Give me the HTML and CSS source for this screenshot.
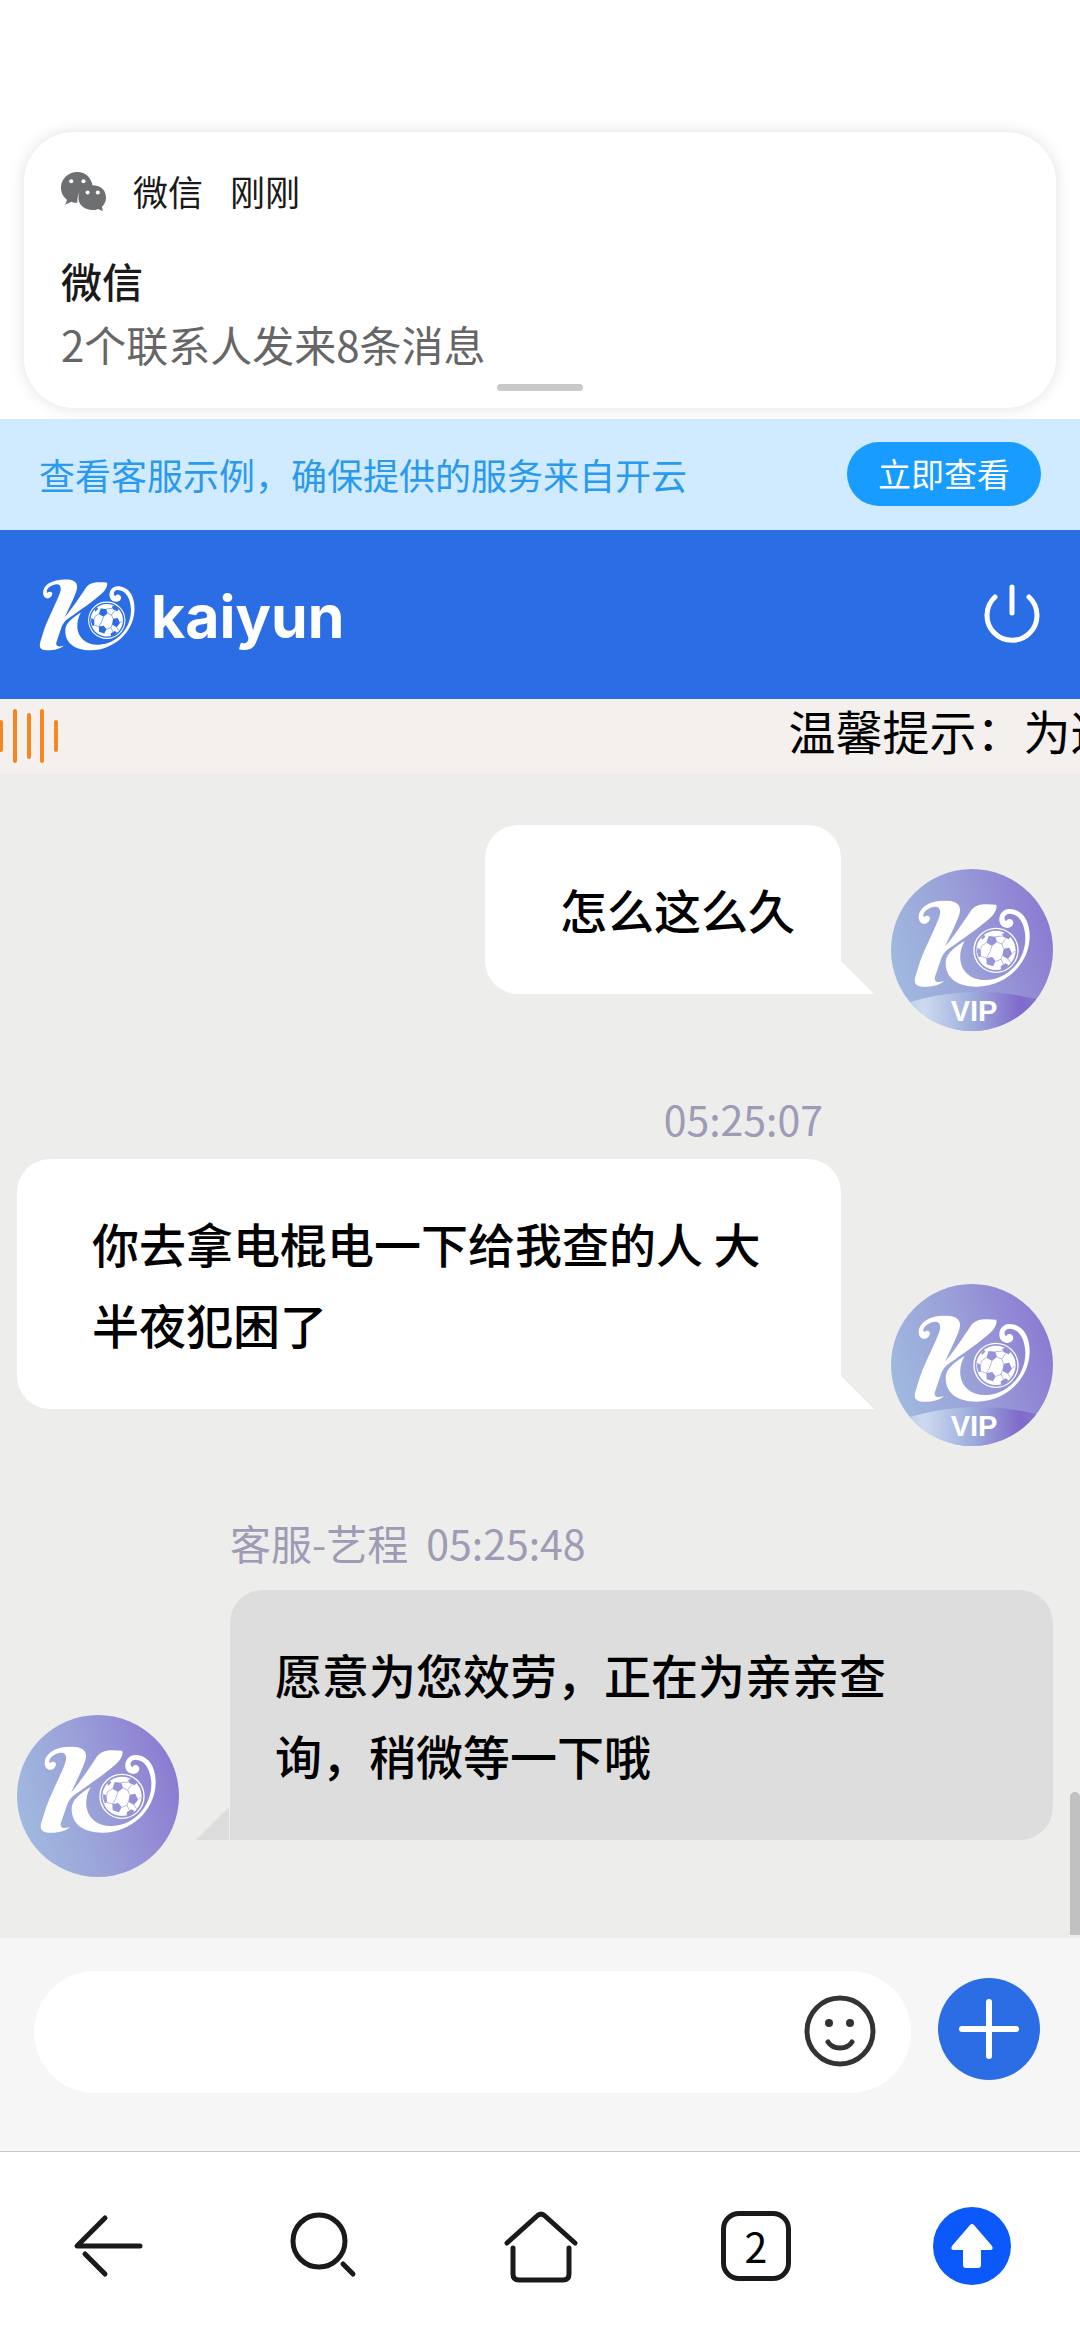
FILE: index.html
```html
<!DOCTYPE html>
<html lang="zh-CN">
<head>
    <meta charset="UTF-8">
    <meta name="viewport" content="width=device-width, initial-scale=1.0">
    <title>kaiyun</title>
    <link rel="stylesheet" href="styles.css">
</head>
<body>
    <!-- Shared logo and avatar shapes -->
    <svg class="defs" aria-hidden="true">
        <defs>
            <linearGradient id="avatar-bg" x1="0" y1="0.7" x2="1" y2="0.4">
                <stop offset="0" stop-color="#a0bbdf"/>
                <stop offset="0.5" stop-color="#9a9fd8"/>
                <stop offset="1" stop-color="#8b7bd2"/>
            </linearGradient>
            <linearGradient id="vip-bg" x1="0" y1="0" x2="1" y2="0">
                <stop offset="0.02" stop-color="#b4c4e6"/>
                <stop offset="0.2" stop-color="#cddaf0"/>
                <stop offset="0.5" stop-color="#9daddc"/>
                <stop offset="0.8" stop-color="#8069cb"/>
                <stop offset="1" stop-color="#8c83d4"/>
            </linearGradient>
            <clipPath id="avatar-clip"><circle cx="306" cy="285" r="243"/></clipPath>
            <mask id="ball-mask" maskUnits="userSpaceOnUse" x="300" y="210" width="160" height="160">
                <circle cx="378" cy="286" r="59" fill="#fff"/>
                <g fill="#000">
                    <path d="M356 243l20 2 5 16-15 12-17-10z"/>
                    <path d="M396 236l12-3 14 12-6 8-16-7z"/>
                    <path d="M401 281l17-3 8 18-12 16-17-10z"/>
                    <path d="M349 309l18-3 10 13-8 15-19-6z"/>
                    <path d="M392 334l15-9 8 5-9 11-13 3z"/>
                    <path d="M322 278l10 6 1 20-7 3-5-16z"/>
                    <path d="M334 247l8-8 4 6-10 10z"/>
                </g>
                <g stroke="#000" stroke-width="2" fill="none">
                    <path d="M381 261l14 6 6 14M366 273l-8 22-9 14M349 263l-15 10-2 11M333 304l16 5M377 319l16-6 4-11M393 313l8 16M376 245l22-2M395 267l12-16M414 312l8 11M426 296l8-8"/>
                </g>
            </mask>
        </defs>
        <symbol id="logo" viewBox="132 136 348 262">
            <path d="M180 190C178 206 160 212 151 201C141 187 146 165 166 152C186 139 215 136 238 138C264 140 275 154 268 178C261 201 240 243 225 275C248 248 280 202 302 168C315 148 338 145 378 149C383 156 376 174 361 188C328 218 280 250 238 280C224 290 217 300 211 318L195 365C190 381 203 385 222 378C207 392 182 396 158 395C136 394 131 384 136 365L150 320C166 275 196 219 208 185C215 162 206 153 190 156C166 161 155 178 162 187C167 179 180 181 180 190Z"/>
            <path d="M284 258C242 284 227 301 227 325C227 371 264 395 318 395C402 396 477 331 479 246C480 195 455 162 418 162C396 162 384 183 389 202C395 223 427 225 430 205C431 192 413 187 409 199C400 193 402 177 418 176C447 176 464 206 466 246C468 313 416 372 350 375C303 377 275 350 271 315C269 292 275 273 284 258Z"/>
            <circle cx="378" cy="286" r="66" fill="none" stroke="currentColor" stroke-width="4"/>
            <rect x="312" y="220" width="132" height="132" mask="url(#ball-mask)"/>
        </symbol>
        <symbol id="avatar-face" viewBox="63 42 486 486">
            <circle cx="306" cy="285" r="243" fill="url(#avatar-bg)"/>
            <use href="#logo" x="132" y="136" width="348" height="262"/>
        </symbol>
        <symbol id="vip-ribbon" viewBox="63 42 486 486">
            <path d="M63 460Q306 370 549 446V540H63Z" fill="url(#vip-bg)" clip-path="url(#avatar-clip)"/>
        </symbol>
    </svg>

    <div class="app">
        <!-- Push notification -->
        <section class="notification">
            <div class="notification-source">
                <svg class="icon-wechat" viewBox="0 0 44 38">
                    <path fill="#6e6f71" d="M16 0C7 0 0 7 0 15c0 6 3 10 6 12l-2 5 6-3c2 1 4 1 6 1v-3c0-8 7-13 15-13C30 6 24 0 16 0Z"/>
                    <path fill="#6e6f71" d="M31 13c-8 0-14 5-14 12s6 12 14 12c2 0 4 0 5-1l5 2-1-4c2-2 4-5 4-9 0-7-5-12-13-12Z"/>
                    <g fill="#fff"><circle cx="10" cy="9" r="2"/><circle cx="22" cy="9" r="2"/><circle cx="26" cy="20" r="2"/><circle cx="36" cy="20" r="2"/></g>
                </svg>
                <span>微信</span>
                <span>刚刚</span>
            </div>
            <div class="notification-title">微信</div>
            <div class="notification-text">2个联系人发来8条消息</div>
            <div class="notification-handle"></div>
        </section>

        <div class="banner">
            <span>查看客服示例，确保提供的服务来自开云</span>
            <button class="banner-button" type="button">立即查看</button>
        </div>

        <header class="header">
            <a class="brand" href="#">
                <svg class="brand-logo"><use href="#logo"/></svg>
                <span class="brand-name">kaiyun</span>
            </a>
            <button class="icon-button" type="button" aria-label="退出">
                <svg width="58" height="62" viewBox="0 0 58 62" fill="none" stroke="#fff" stroke-width="5" stroke-linecap="round">
                    <path d="M29 3v26M12 13a25 25 0 1 0 34 0"/>
                </svg>
            </button>
        </header>

        <div class="notice">
            <svg class="notice-icon" width="60" height="56" viewBox="0 0 60 56" stroke="#f6861f" stroke-width="4" stroke-linecap="round">
                <path d="M1 14v28M15 3v50M29 7v42M42 3v50M56 14v28"/>
            </svg>
            <div class="notice-text">温馨提示：为这</div>
        </div>

        <main class="chat">
            <div class="message message-mine">
                <div class="message-body">
                    <div class="bubble">怎么这么久</div>
                </div>
                <svg class="avatar" viewBox="0 0 162 162">
                    <use href="#avatar-face"/>
                    <use href="#vip-ribbon"/>
                    <text class="vip-text" x="83" y="152">VIP</text>
                </svg>
            </div>

            <div class="message message-mine">
                <div class="message-body">
                    <div class="message-meta">05:25:07</div>
                    <div class="bubble">你去拿电棍电一下给我查的人 大半夜犯困了</div>
                </div>
                <svg class="avatar" viewBox="0 0 162 162">
                    <use href="#avatar-face"/>
                    <use href="#vip-ribbon"/>
                    <text class="vip-text" x="83" y="152">VIP</text>
                </svg>
            </div>

            <div class="message message-agent">
                <svg class="avatar" viewBox="0 0 162 162"><use href="#avatar-face"/></svg>
                <div class="message-body">
                    <div class="message-meta">
                        <span>客服-艺程</span>
                        <span>05:25:48</span>
                    </div>
                    <div class="bubble">愿意为您效劳，正在为亲亲查询，稍微等一下哦</div>
                </div>
            </div>
            <div class="scroll-thumb"></div>
        </main>

        <form class="composer">
            <div class="composer-field">
                <input class="composer-input" type="text" aria-label="消息">
                <button class="icon-button" type="button" aria-label="表情">
                    <svg width="72" height="72" viewBox="0 0 72 72" fill="none" stroke="#333" stroke-width="5" stroke-linecap="round">
                        <circle cx="36" cy="36" r="33"/>
                        <path d="M24 47c5 8 19 8 24 0"/>
                        <g fill="#333" stroke="none"><circle cx="25" cy="28" r="4"/><circle cx="46" cy="28" r="4"/></g>
                    </svg>
                </button>
            </div>
            <button class="composer-add" type="button" aria-label="更多">
                <svg width="60" height="60" viewBox="0 0 60 60" stroke="#fff" stroke-width="6" stroke-linecap="round">
                    <path d="M30 3v54M3 30h54"/>
                </svg>
            </button>
        </form>

        <nav class="toolbar">
            <button class="toolbar-item" type="button" aria-label="后退">
                <svg class="toolbar-icon" viewBox="0 0 80 80"><path d="M37 12L9 40h63M17 48l20 20"/></svg>
            </button>
            <button class="toolbar-item" type="button" aria-label="搜索">
                <svg class="toolbar-icon" viewBox="0 0 80 80"><circle cx="35" cy="35" r="26"/><path d="M59 58l10 10"/></svg>
            </button>
            <button class="toolbar-item" type="button" aria-label="主页">
                <svg class="toolbar-icon" viewBox="0 0 80 80"><path d="M7 37L37 10q4-4 8 0l30 27M13 42v26q0 6 6 6h44q6 0 6-6V42"/></svg>
            </button>
            <button class="toolbar-item" type="button" aria-label="标签页">
                <span class="tab-count">2</span>
            </button>
            <button class="toolbar-item" type="button" aria-label="回到顶部">
                <svg class="toolbar-icon" viewBox="0 0 80 80">
                    <circle class="top-circle" cx="40" cy="40" r="39"/>
                    <path class="top-arrow" d="M38 19q2-2 4 0l18 21q2 4-2 4h-9v15q0 3-3 3H34q-3 0-3-3V44h-9q-4 0-2-4z"/>
                </svg>
            </button>
        </nav>
    </div>
</body>
</html>
```
FILE: styles.css
```css
:root {
    --brand: #2b6de5;
    --banner-bg: #d0ebff;
    --banner-accent: #189cff;
    --chat-bg: #ededeb;
    --meta: #9f9bb5;
    --ink: #1a1a1a;
}

* {
    margin: 0;
    padding: 0;
    box-sizing: border-box;
}

body {
    background: #fff;
    color: #000;
    font-family: 'Noto Sans CJK SC', sans-serif;
}

button,
input {
    border: none;
    background: none;
    font: inherit;
    color: inherit;
}

button {
    cursor: pointer;
}

svg {
    display: block;
}

.defs {
    position: absolute;
    width: 0;
    height: 0;
}

.app {
    display: flex;
    flex-direction: column;
    min-height: 100vh;
    padding-top: 132px;
}

/* Notification */
.notification {
    display: flex;
    flex-direction: column;
    margin: 0 24px 11px;
    padding: 34px 37px 17px;
    border-radius: 50px;
    background: #fff;
    box-shadow: 0 0 16px rgba(0, 0, 0, 0.12);
}

.notification-source {
    display: flex;
    align-items: center;
    gap: 27px;
    margin-bottom: 33px;
    font-size: 35px;
    line-height: 50px;
    color: var(--ink);
}

.icon-wechat {
    width: 45px;
    height: 39px;
}

.notification-title {
    font-size: 41px;
    line-height: 63px;
    font-weight: 500;
    color: var(--ink);
}

.notification-text {
    margin-bottom: 9px;
    font-size: 42px;
    line-height: 63px;
    color: #666;
}

.notification-handle {
    align-self: center;
    width: 86px;
    height: 7px;
    border-radius: 4px;
    background: #c9c9c9;
}

/* Banner */
.banner {
    display: flex;
    align-items: center;
    justify-content: space-between;
    height: 111px;
    padding: 0 39px 2px;
    background: var(--banner-bg);
    color: #2a9aef;
    font-size: 36px;
}

.banner-button {
    height: 64px;
    padding: 0 31px 2px;
    border-radius: 32px;
    background: var(--banner-accent);
    color: #fff;
    font-size: 33px;
    line-height: 62px;
}

/* Header */
.header {
    display: flex;
    align-items: center;
    justify-content: space-between;
    height: 169px;
    padding: 0 39px;
    background: var(--brand);
}

.brand {
    display: flex;
    align-items: center;
    gap: 16px;
    color: #fff;
    text-decoration: none;
}

.brand-logo {
    width: 96px;
    height: 72px;
    fill: currentColor;
}

.brand-name {
    padding-top: 4px;
    font-family: Inter, sans-serif;
    font-size: 59px;
    font-weight: 700;
    line-height: 72px;
}

/* Scrolling notice */
.notice {
    display: flex;
    align-items: center;
    justify-content: space-between;
    height: 74px;
    overflow: hidden;
    background: #f4f0ed;
}

.notice-icon {
    flex: none;
}

.notice-text {
    flex: none;
    width: 27%;
    padding-bottom: 12px;
    font-size: 47px;
    line-height: 62px;
    white-space: nowrap;
}

/* Chat */
.chat {
    position: relative;
    flex: 1;
    display: flex;
    flex-direction: column;
    gap: 54px;
    padding: 52px 27px 61px 17px;
    background: var(--chat-bg);
}

.message {
    display: flex;
    align-items: flex-end;
    gap: 50px;
}

.message-mine {
    justify-content: flex-end;
}

.message-agent {
    gap: 51px;
    margin-top: 9px;
}

.message-body {
    display: flex;
    flex-direction: column;
    align-items: flex-start;
    flex: 1;
    padding-bottom: 37px;
}

.message-mine .message-body {
    align-items: flex-end;
}

.message-meta {
    display: flex;
    gap: 18px;
    margin-bottom: 15px;
    font-size: 41px;
    line-height: 66px;
    color: var(--meta);
}

.message-mine .message-meta {
    margin-bottom: 8px;
    padding-right: 18px;
}

.bubble {
    position: relative;
    padding: 43px 46px 45px 75px;
    border-radius: 33px 33px 0 33px;
    background: #fff;
    font-size: 47px;
    font-weight: 500;
    line-height: 81px;
}

.message-agent .bubble {
    padding: 43px 75px 45px 45px;
    border-radius: 33px 33px 33px 0;
    background: #ddd;
}

.bubble::after {
    content: '';
    position: absolute;
    left: 100%;
    bottom: 0;
    width: 33px;
    height: 33px;
    background: inherit;
    clip-path: polygon(0 0, 100% 100%, 0 100%);
}

.message-agent .bubble::after {
    right: 100%;
    left: auto;
    margin-right: 1px;
    clip-path: polygon(100% 0, 100% 100%, 0 100%);
}

.avatar {
    flex: none;
    width: 162px;
    height: 162px;
    fill: #fff;
    color: #fff;
}

.vip-text {
    font-family: 'Liberation Sans', sans-serif;
    font-size: 29px;
    font-weight: 700;
    text-anchor: middle;
}

.scroll-thumb {
    position: absolute;
    right: 0;
    bottom: 3px;
    width: 10px;
    height: 143px;
    border-radius: 5px 5px 0 0;
    background: #c1c1c1;
}

/* Message composer */
.composer {
    display: flex;
    align-items: flex-start;
    gap: 27px;
    height: 213px;
    padding: 33px 40px 0 34px;
    background: #f6f6f6;
}

.composer-field {
    display: flex;
    align-items: center;
    flex: 1;
    height: 122px;
    padding: 0 35px 2px 48px;
    border-radius: 61px;
    background: #fff;
}

.composer-input {
    flex: 1;
    min-width: 0;
    height: 100%;
    font-size: 47px;
    outline: none;
}

.composer-add {
    display: flex;
    align-items: center;
    justify-content: center;
    width: 102px;
    height: 102px;
    margin-top: 7px;
    border-radius: 50%;
    background: var(--brand);
}

/* Browser toolbar */
.toolbar {
    display: flex;
    height: 189px;
    border-top: 1px solid #c8c8c8;
    background: #fff;
}

.toolbar-item {
    display: flex;
    flex: 1;
    align-items: center;
    justify-content: center;
}

.toolbar-icon {
    width: 80px;
    height: 80px;
    fill: none;
    stroke: var(--ink);
    stroke-width: 5px;
    stroke-linecap: round;
    stroke-linejoin: round;
}

.tab-count {
    width: 70px;
    height: 70px;
    border: 5px solid var(--ink);
    border-radius: 18px;
    font-size: 41px;
    line-height: 58px;
}

.top-circle {
    fill: #0b59fa;
    stroke: none;
}

.top-arrow {
    fill: #fff;
    stroke: none;
}
```
